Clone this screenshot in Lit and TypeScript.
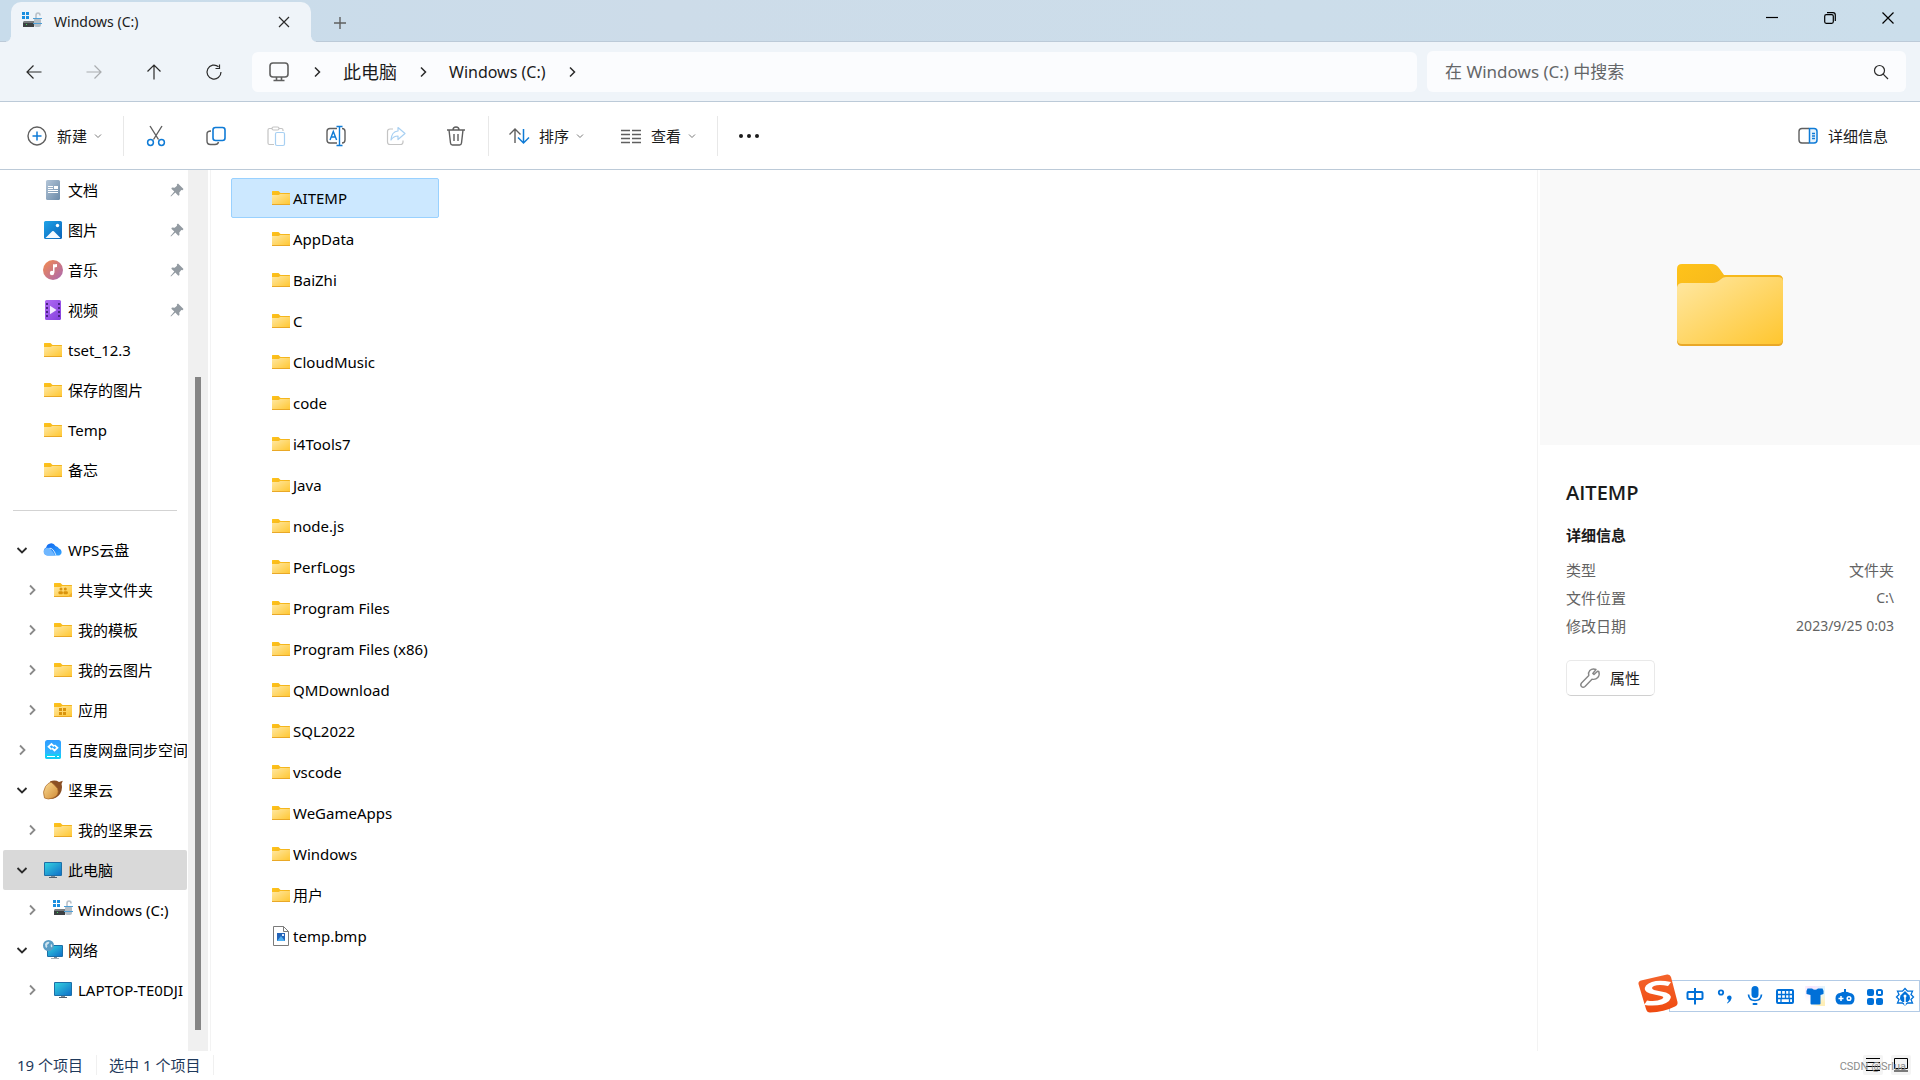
import { LitElement, html, css, svg, nothing, TemplateResult } from "lit";
import { customElement, state } from "lit/decorators.js";
import { classMap } from "lit/directives/class-map.js";

type Glyph = () => TemplateResult;

interface TreeItem {
  label: string;
  icon: Glyph;
  pinned?: boolean;
  nested?: boolean;
  toggle?: "open" | "closed";
  current?: boolean;
}

/* ---------- shared gradients ---------- */
const gradients = html`
  <svg class="defs" width="0" height="0" aria-hidden="true">
    <defs>
      <linearGradient id="g-folder" x1="0" y1="0" x2="1" y2="1">
        <stop offset="0" stop-color="#ffe8a3" /><stop offset="1" stop-color="#ffc62f" />
      </linearGradient>
      <linearGradient id="g-folder-back" x1="0" y1="0" x2="1" y2="1">
        <stop offset="0" stop-color="#ffc31a" /><stop offset="1" stop-color="#e9a71f" />
      </linearGradient>
      <linearGradient id="g-doc" x1="0" y1="0" x2="1" y2="1">
        <stop offset="0" stop-color="#b3c5d8" /><stop offset="1" stop-color="#6b8aa8" />
      </linearGradient>
      <linearGradient id="g-pic" x1="0" y1="0" x2="1" y2="1">
        <stop offset="0" stop-color="#1fa3e8" /><stop offset="1" stop-color="#0b62b8" />
      </linearGradient>
      <linearGradient id="g-music" x1="0" y1="0" x2="1" y2="1">
        <stop offset="0" stop-color="#f58b4c" /><stop offset="1" stop-color="#a867b4" />
      </linearGradient>
      <linearGradient id="g-video" x1="0" y1="0" x2="1" y2="1">
        <stop offset="0" stop-color="#b06bf3" /><stop offset="1" stop-color="#8440dd" />
      </linearGradient>
      <linearGradient id="g-screen" x1="0" y1="0" x2="1" y2="1">
        <stop offset="0" stop-color="#33d1e0" /><stop offset="1" stop-color="#1070c8" />
      </linearGradient>
      <linearGradient id="g-cloud" x1="0" y1="0" x2="1" y2="1">
        <stop offset="0" stop-color="#0a62ee" /><stop offset="1" stop-color="#36a6ff" />
      </linearGradient>
      <linearGradient id="g-nut" x1="0" y1="0" x2="1" y2="1">
        <stop offset="0" stop-color="#fbdc94" /><stop offset="1" stop-color="#d08a35" />
      </linearGradient>
      <linearGradient id="g-sync" x1="0" y1="0" x2="0" y2="1">
        <stop offset="0" stop-color="#2f9dff" /><stop offset="1" stop-color="#2fc0ff" />
      </linearGradient>
      <linearGradient id="g-sogou" x1="0" y1="0" x2="0" y2="1">
        <stop offset="0" stop-color="#f4642c" /><stop offset="1" stop-color="#ef4a10" />
      </linearGradient>
    </defs>
  </svg>
`;

/* ---------- file type icons, 20 x 20 ---------- */
const pic = (body: TemplateResult) =>
  html`<svg class="pic" width="20" height="20" viewBox="0 0 20 20" aria-hidden="true">${body}</svg>`;

const folderBody = svg`
  <path d="M1 3.500Q1 3 1.500 3H7.500L9.500 5H18.500Q19 5 19 5.500V16H1z" fill="url(#g-folder-back)"/>
  <path d="M1 7H7.500L9.300 6H19V16.500Q19 17 18.500 17H1.500Q1 17 1 16.500z" fill="url(#g-folder)"/>
  <path d="M1 16h18v.5q0 .5-.5.5h-17q-.5 0-.5-.5z" fill="#e9a827"/>`;

const folder: Glyph = () => pic(folderBody);
const folderShared: Glyph = () => pic(svg`${folderBody}
  <path d="M19 12.500V17H14.500z" fill="#f0b02e"/>
  <g fill="#d9930d"><circle cx="8" cy="9" r="1.500"/><circle cx="12.300" cy="9" r="1.500"/>
  <rect x="5.500" y="11.300" width="4.300" height="3" rx="1"/><rect x="10.500" y="11.300" width="4.300" height="3" rx="1"/></g>`);
const folderApps: Glyph = () => pic(svg`${folderBody}
  <g fill="#d9930d"><rect x="6" y="8" width="3" height="3"/><rect x="10" y="8" width="3" height="3"/>
  <rect x="6" y="12" width="3" height="3"/><rect x="10" y="12" width="3" height="3"/></g>`);
const documentPic: Glyph = () => pic(svg`
  <rect x="3" y="0" width="14" height="20" rx="1.500" fill="url(#g-doc)"/>
  <g fill="#fff"><rect x="5" y="6" width="5" height="1"/><rect x="5" y="8" width="5" height="1"/>
  <rect x="11" y="6" width="4" height="3"/><rect x="5" y="10" width="10" height="1"/><rect x="5" y="12" width="10" height="1"/></g>`);
const picture: Glyph = () => pic(svg`
  <rect x="1" y="1" width="18" height="18" rx="1.500" fill="url(#g-pic)"/>
  <path d="M2.500 18L9.200 11.300Q10 10.500 10.800 11.300L17.500 18z" fill="#f4f9ff"/><circle cx="14.500" cy="5.500" r="1.700" fill="#fff"/>`);
const music: Glyph = () => pic(svg`
  <circle cx="10" cy="10" r="10" fill="url(#g-music)"/>
  <path d="M10 4.500L14 4V7L11.300 7.400V13" fill="#fff"/><path d="M10 4.300V13h1.300V5z" fill="#fff"/><circle cx="9" cy="13" r="2.200" fill="#fff"/>`);
const video: Glyph = () => pic(svg`
  <rect x="2" y="0" width="16" height="20" rx="1.500" fill="url(#g-video)"/>
  <g fill="#4a2385"><rect x="3" y="3" width="2" height="2"/><rect x="3" y="7" width="2" height="2"/><rect x="3" y="11" width="2" height="2"/><rect x="3" y="15" width="2" height="2"/>
  <rect x="15" y="3" width="2" height="2"/><rect x="15" y="7" width="2" height="2"/><rect x="15" y="11" width="2" height="2"/><rect x="15" y="15" width="2" height="2"/></g>
  <path d="M7 5.800L13.500 10L7 14.200z" fill="#f2eaff"/>`);
const cloud: Glyph = () => pic(svg`
  <path d="M5 15.500A4.300 4.300 0 0 1 3.200 7.400A5 5 0 0 1 12.500 6Q15 6.500 16 8.500A3.700 3.700 0 0 1 16.300 15.500z" fill="url(#g-cloud)"/>
  <path d="M.6 12A4 4 0 0 1 6 8Q8.500 9 12 15.500H4.500Q1 15.300.6 12z" fill="#6fb7ff"/>
  <path d="M6.500 8.300Q10 7.500 13 15.300" fill="none" stroke="#fff" stroke-width=".8"/>`);
const syncDisk: Glyph = () => pic(svg`
  <rect x="2" y="0" width="16" height="19" rx="2.500" fill="url(#g-sync)"/>
  <path d="M2 14H18V16.500Q18 19 15.500 19H4.500Q2 19 2 16.500z" fill="#12cdf5"/>
  <rect x="4" y="16" width="8" height="1" fill="#fff"/><rect x="14" y="16" width="2" height="1" fill="#fff"/>
  <path d="M8.500 9.500L5.500 6.700L8.500 4L11 6.300M11.500 5L14.500 7.800L11.500 10.500L9 8.200" fill="none" stroke="#fff" stroke-width="1.700"/>`);
const nut: Glyph = () => pic(svg`
  <path d="M7 1.500Q12-.5 16 2L19.800.8L18.500 4Q20 9 17 14Q13 19.500 6 19z" fill="#8a4f24"/>
  <path d="M8 2Q12 5 14.500 8.500Q17 15 10 18Q5 20 1.500 18Q-1 12 2.500 6.500Q5 3 8 2z" fill="url(#g-nut)" stroke="#a8672a" stroke-width=".7"/>`);
const computer: Glyph = () => pic(svg`
  <rect x="8" y="16" width="4" height="2" fill="#7e8a96"/><rect x="6" y="17" width="8" height="1" fill="#55606b"/>
  <rect x="1" y="2" width="18" height="14" rx="1" fill="#1b6fa8"/><rect x="2" y="3" width="16" height="12" fill="url(#g-screen)"/>`);
const drive: Glyph = () => pic(svg`
  <g fill="#1b8fe0"><rect x="0" y="0" width="3" height="3"/><rect x="4" y="0" width="3" height="3"/><rect x="0" y="4" width="3" height="3"/><rect x="4" y="4" width="3" height="3"/></g>
  <path d="M2 9H12V15H1V11z" fill="#3c4043"/><path d="M2 9H12V11H1z" fill="#777c80"/><rect x="4" y="12" width="1" height="1" fill="#3fdc5a"/>
  <path d="M14 6V3.500Q14 1 16 1Q18 1 18 3.500" fill="none" stroke="#b9c2ca" stroke-width="1.600"/>
  <rect x="12" y="6" width="7" height="9" rx="2" fill="#b5bec6"/><rect x="11" y="6" width="9" height="1" fill="#4e9fd6"/><rect x="11" y="11" width="9" height="1" fill="#4e9fd6"/>`);
const network: Glyph = () => pic(svg`
  <rect x="11" y="17" width="3" height="2" fill="#7e8a96"/><rect x="8" y="18" width="8" height="1" fill="#a5adb5"/>
  <rect x="4" y="5" width="16" height="12" rx="1" fill="#1b6fa8"/><rect x="5" y="6" width="14" height="10" fill="url(#g-screen)"/>
  <circle cx="5.500" cy="5.500" r="5.500" fill="#5a9cc4"/><path d="M2 4Q4 1 6.500 2Q6 4 4 5Q5 7 3.500 8Q2 7 2 4zM8 4Q10 5 9 7.500Q7 7 8 4z" fill="#cfe4ef"/>`);
const bitmap: Glyph = () => pic(svg`
  <path d="M2.500.5H12.500L17.500 5.500V19.500H2.500z" fill="#fff" stroke="#7b7b7b"/><path d="M12.500.5V5.500H17.500" fill="none" stroke="#7b7b7b"/>
  <rect x="6" y="7" width="8" height="8" fill="#2464b8"/><path d="M6 15L10 10L14 15z" fill="#4fb0f2"/><rect x="11" y="8" width="2" height="2" fill="#dceaff"/>`);

const bigFolder = html`
  <svg width="106" height="84" viewBox="0 0 106 84" aria-hidden="true">
    <path d="M0 5Q0 0 5 0H35Q39 0 42 4L47 11H101Q106 11 106 16V78H0z" fill="url(#g-folder-back)" />
    <path d="M0 23Q1 19 5 19H35Q40 19 44 15Q46 13 49 13H101Q106 13 106 17V77Q106 82 101 82H5Q0 82 0 77z" fill="#e9a827" />
    <path d="M0 23Q1 19 5 19H35Q40 19 44 15Q46 13 49 13H101Q106 13 106 17V75Q106 80 101 80H5Q0 80 0 75z" fill="url(#g-folder)" />
  </svg>
`;

/* ---------- line icons ---------- */
const line = (size: number, body: TemplateResult, cls = "") =>
  html`<svg class="line ${cls}" width=${size} height=${size} viewBox="0 0 ${size} ${size}" aria-hidden="true">${body}</svg>`;

const chevRight = line(12, svg`<path d="M4 1.500L8.500 6L4 10.500"/>`);
const chevDown = line(12, svg`<path d="M1.500 4L6 8.500L10.500 4"/>`);
const caret = line(8, svg`<path d="M1 2.500L4 5.500L7 2.500"/>`, "faint");
const pin = html`<svg width="14" height="14" viewBox="0 0 14 14" aria-hidden="true">
  <path d="M8 .5L13.500 6L12.500 7.200L11.300 7L9.300 9.500L9.500 12L8.300 12.700L5.300 9.500L1 13.500L.5 13L4.300 8.500L1.300 5.700L2 4.500L4.700 4.700L7 2.700L6.800 1.500z" fill="#939ba2" /></svg>`;

const icons = {
  back: line(16, svg`<path d="M15.500 8H1M7.500 1.500L1 8L7.500 14.500"/>`),
  forward: line(16, svg`<path d="M.5 8H15M8.500 1.500L15 8L8.500 14.500"/>`),
  up: line(16, svg`<path d="M8 15.500V1M1.500 7.500L8 1L14.500 7.500"/>`),
  refresh: line(16, svg`<path d="M15 8A7 7 0 1 1 12.500 2.700M13.500.5V4.500H9.500"/>`),
  monitor: line(20, svg`<rect x="1" y="1" width="18" height="14" rx="3" stroke-width="1.600"/><path d="M7.500 15V18M12.500 15V18M4.500 18.500H15.500" stroke-width="1.600"/>`, "grey"),
  search: line(16, svg`<circle cx="6.500" cy="6.500" r="5"/><path d="M10.200 10.200L15 15"/>`),
  close: line(12, svg`<path d="M1 1L11 11M11 1L1 11"/>`),
  plus: line(12, svg`<path d="M6 0V12M0 6H12"/>`, "grey"),
  minimise: line(12, svg`<path d="M0 5.500H12"/>`, "black"),
  restore: line(12, svg`<rect x=".7" y="2.700" width="8.600" height="8.600" rx="1.500"/><path d="M3 .7H9Q11.300.7 11.300 3V9" />`, "black"),
  windowClose: line(12, svg`<path d="M.5.5L11.500 11.500M11.500.5L.5 11.500"/>`, "black"),
  create: line(20, svg`<circle cx="10" cy="10" r="9"/><path class="blue" d="M10 5.500V14.500M5.500 10H14.500" stroke-width="1.500"/>`, "grey"),
  cut: line(20, svg`<path d="M4 0L12.500 13.500M16 0L7.500 13.500"/><circle class="blue" cx="4.500" cy="16.500" r="2.900" stroke-width="1.500"/><circle class="blue" cx="15.500" cy="16.500" r="2.900" stroke-width="1.500"/>`, "grey"),
  copy: line(20, svg`<path d="M5 5Q1 5 1 8V15Q1 18.500 4.500 18.500H9Q12 18.500 12.500 16"/><rect class="blue" x="7" y="1.500" width="12" height="13" rx="2.500" stroke-width="1.600"/>`, "grey"),
  paste: line(20, svg`<path d="M8 18.500H3.500Q2 18.500 2 17V4Q2 2.500 3.500 2.500H6M13 2.500H15.500Q17 2.500 17 4V5" stroke="#c4c4c4"/><rect x="6" y="1" width="7" height="3" rx="1.500" stroke="#c4c4c4"/><rect x="9.500" y="6.500" width="9" height="13" rx="1.500" stroke="#a8d0f2"/>`),
  rename: line(20, svg`<path d="M11 2.500H4Q1 2.500 1 5.500V14Q1 17 4 17H11M16 2.500Q19 2.500 19 5.500V14Q19 17 16 17"/><path class="blue" d="M13.500.5V19.500M10.500.5H16.500M10.500 19.500H16.500M4 14L7.300 5.500L10.600 14M5.200 11H9.400" stroke-width="1.400"/>`, "grey"),
  share: line(20, svg`<path d="M7 3H4Q1.500 3 1.500 5.500V16Q1.500 18.500 4 18.500H14.500Q17 18.500 17 16V14.500" stroke="#c4c4c4"/><path d="M12 1.500L19 7.500L12 13.500V10Q7.500 10 5 14Q5.500 5.500 12 5z" stroke="#a8d0f2" stroke-linejoin="round"/>`),
  bin: line(20, svg`<path d="M1 4H19M7 4Q7 1 10 1Q13 1 13 4M3 4L4.500 17Q4.700 19 6.500 19H13.500Q15.300 19 15.500 17L17 4M8 8V15M12 8V15"/>`, "grey"),
  sort: line(20, svg`<path d="M6 17V3M.5 8.500L6 3L11.500 8.500"/><path class="blue" d="M14.500 3V17M9 11.500L14.500 17L20 11.500" stroke-width="1.500"/>`, "grey"),
  view: line(20, svg`<path d="M0 4.500H9M11 4.500H20M0 8.500H9M11 8.500H20M0 12.500H9M11 12.500H20M0 16.500H9M11 16.500H20"/>`, "grey"),
  more: html`<svg width="20" height="20" viewBox="0 0 20 20" aria-hidden="true"><g fill="#1b1b1b"><circle cx="2" cy="10" r="2" /><circle cx="10" cy="10" r="2" /><circle cx="18" cy="10" r="2" /></g></svg>`,
  pane: line(20, svg`<path d="M11 2.500H4Q1 2.500 1 5.500V14Q1 17 4 17H11"/><path class="blue" d="M11.500 2.500H16Q19 2.500 19 5.500V14Q19 17 16 17H11.500zM14 7.500H17M14 10H17M14 12.500H17" stroke-width="1.500" fill="#e8f3fc"/>`, "grey"),
  wrench: line(20, svg`<path d="M17.500 3.200L14 6.500L12.800 5.500L16 1.500Q12.500 0 9.800 2.500Q8 4.500 8.800 7.500L1.500 15Q0 17 1.500 18.500Q3 20 5 18.500L12 11.200Q15.500 12 17.800 9.500Q20 7 18.800 3.500z" stroke-linejoin="round"/>`, "grey"),
};

/* ---------- input method icons ---------- */
const ime = (body: TemplateResult) =>
  html`<svg width="20" height="20" viewBox="0 0 20 20" aria-hidden="true">${body}</svg>`;
const B = "#0070d8";
const imeButtons: { name: string; icon: TemplateResult; glow?: boolean }[] = [
  { name: "中文", icon: ime(svg`<rect x="2.500" y="6" width="15" height="7" rx="1" fill="none" stroke=${B} stroke-width="2"/><path d="M10 2V18.500" stroke=${B} stroke-width="2"/>`) },
  { name: "标点", icon: ime(svg`<circle cx="6" cy="6.500" r="2.200" fill="none" stroke=${B} stroke-width="1.800"/><path d="M12 12Q12 9.500 14.500 9.500Q17 9.800 16.500 12.500Q16 15.500 12.500 17.500L12 17Q14 15 13.700 13.700Q12 13.500 12 12z" fill=${B}/>`) },
  { name: "语音", icon: ime(svg`<rect x="6.500" y="0" width="7" height="12" rx="3.500" fill=${B}/><path d="M3.500 8.500Q4 14.500 10 14.500Q16 14.500 16.500 8.500" fill="none" stroke=${B} stroke-width="1.700"/><rect x="7.500" y="17" width="5" height="2" rx="1" fill=${B}/>`) },
  { name: "键盘", icon: ime(svg`<rect x="2" y="4" width="16" height="13" rx="1" fill="none" stroke=${B} stroke-width="2"/><path d="M3 8.500H17M3 12.500H17M6.500 4V12M10.500 4V12M14 4V12M6 12.500V16M14.500 12.500V16" stroke=${B} stroke-width="1.300"/>`) },
  { name: "皮肤", glow: true, icon: ime(svg`<path d="M2.500 2.500H7Q10 5 13 2.500H17.500Q19 4.500 18.500 8L15.500 9V17.500Q15.500 18.500 14.500 18.500H6.500Q5.500 18.500 5.500 17.500V9L1.500 8Q1 4.500 2.500 2.500z" fill=${B}/>`) },
  { name: "助手", icon: ime(svg`<rect x="9" y="3" width="2" height="4" fill=${B}/><path d="M5 7Q10 4.500 15 7Q19.500 7.500 19.500 12.500Q19.500 18.500 14.500 18.500H5.500Q.5 18.500.5 12.500Q.5 7.500 5 7z" fill=${B}/><path d="M3.500 12.500H8.500M6 10V15" stroke="#fff" stroke-width="1.500"/><circle cx="14" cy="12.500" r="1.800" fill="none" stroke="#fff" stroke-width="1.500"/>`) },
  { name: "工具箱", icon: ime(svg`<rect x="2" y="3" width="7" height="7" rx="2" fill=${B}/><rect x="2" y="12" width="7" height="7" rx="2" fill=${B}/><rect x="11" y="12" width="7" height="7" rx="2" fill=${B}/><rect x="12" y="4" width="5" height="5" rx="1.500" fill="none" stroke=${B} stroke-width="2"/>`) },
  { name: "智能", icon: ime(svg`<path d="M10 2.500L12.500 5.200H17.500L16 8.500L18.500 11L16 13.500L17.500 17H12.500L10 19L7.500 17H2.500L4 13.500L1.500 11L4 8.500L2.500 5.200H7.500z" fill="none" stroke=${B} stroke-width="1.300"/><path d="M10 5L14.500 9.500Q16 14 12.500 16H7.500Q4 14 5.500 9.500z" fill=${B}/><path d="M10 9V19" stroke="#fff" stroke-width="1.500"/><circle cx="10" cy="10" r="1.500" fill="#fff"/>`) },
];

const tree: (TreeItem | null)[] = [
  { label: "文档", icon: documentPic, pinned: true },
  { label: "图片", icon: picture, pinned: true },
  { label: "音乐", icon: music, pinned: true },
  { label: "视频", icon: video, pinned: true },
  { label: "tset_12.3", icon: folder },
  { label: "保存的图片", icon: folder },
  { label: "Temp", icon: folder },
  { label: "备忘", icon: folder },
  null,
  { label: "WPS云盘", icon: cloud, toggle: "open" },
  { label: "共享文件夹", icon: folderShared, toggle: "closed", nested: true },
  { label: "我的模板", icon: folder, toggle: "closed", nested: true },
  { label: "我的云图片", icon: folder, toggle: "closed", nested: true },
  { label: "应用", icon: folderApps, toggle: "closed", nested: true },
  { label: "百度网盘同步空间", icon: syncDisk, toggle: "closed" },
  { label: "坚果云", icon: nut, toggle: "open" },
  { label: "我的坚果云", icon: folder, toggle: "closed", nested: true },
  { label: "此电脑", icon: computer, toggle: "open", current: true },
  { label: "Windows (C:)", icon: drive, toggle: "closed", nested: true },
  { label: "网络", icon: network, toggle: "open" },
  { label: "LAPTOP-TE0DJI", icon: computer, toggle: "closed", nested: true },
];

const files = [
  "AITEMP", "AppData", "BaiZhi", "C", "CloudMusic", "code", "i4Tools7", "Java", "node.js", "PerfLogs",
  "Program Files", "Program Files (x86)", "QMDownload", "SQL2022", "vscode", "WeGameApps", "Windows", "用户", "temp.bmp",
];

@customElement("app-root")
export class AppRoot extends LitElement {
  @state() private selected = "AITEMP";

  static styles = css`
    :host {
      display: flex;
      flex-direction: column;
      height: 100vh;
      overflow: hidden;
      background: #fff;
      color: #1b1b1b;
      font: 15px/20px "Noto Sans", "Noto Sans CJK SC", sans-serif;
      --edge: #bccad8;
    }
    * { box-sizing: border-box; }
    .defs { position: absolute; }
    button, input {
      font: inherit;
      color: inherit;
      border: 0;
      background: none;
      padding: 0;
      margin: 0;
    }
    button { display: inline-flex; align-items: center; }
    svg { display: block; flex: none; }
    .line { fill: none; stroke: #2b2b2b; stroke-width: 1.2; overflow: visible; }
    .line.grey { stroke: #5f5f5f; stroke-width: 1.4; }
    .line.faint { stroke: #7a7a7a; stroke-width: 1; }
    .line.black { stroke: #000; }
    .line .blue { stroke: #0f7bd6; }
    ul { list-style: none; margin: 0; padding: 0; }

    .titlebar {
      display: flex;
      flex: none;
      height: 42px;
      padding-left: 11px;
      background: linear-gradient(90deg, #c8dceb, #cddce9 35%, #cbdeeb);
      box-shadow: inset 0 -1px var(--edge);
    }
    .tab {
      position: relative;
      display: flex;
      align-items: center;
      width: 300px;
      margin-top: 2px;
      padding: 0 21px 0 11px;
      border-radius: 10px 10px 0 0;
      background: #eff4f9;
      font-size: 14px;
    }
    .tab::before, .tab::after {
      content: "";
      position: absolute;
      bottom: 0;
      width: 5px;
      height: 5px;
    }
    .tab::before { right: 100%; background: radial-gradient(circle at 0 0, transparent 4px, #eff4f9 5px); }
    .tab::after { left: 100%; background: radial-gradient(circle at 100% 0, transparent 4px, #eff4f9 5px); }
    .tab-name { flex: 1; margin-left: 12px; }
    .new-tab { width: 58px; justify-content: center; padding-top: 3px; }
    .window-controls { display: flex; margin-left: auto; padding-right: 3px; }
    .window-controls button { width: 58px; height: 36px; justify-content: center; }

    .navbar {
      display: flex;
      flex: none;
      align-items: center;
      height: 60px;
      padding: 0 14px 0 4px;
      background: #eff4f9;
      border-bottom: 1px solid var(--edge);
    }
    .nav-btn { width: 60px; height: 40px; justify-content: center; }
    .nav-btn:disabled { opacity: 0.35; }
    .address {
      display: flex;
      flex: 1;
      align-items: center;
      gap: 20px;
      height: 40px;
      margin: 0 10px 0 8px;
      padding-left: 17px;
      border-radius: 6px;
      background: #fbfcfe;
    }
    .address .line:not(.grey) { stroke-width: 1.5; }
    .sep { margin-left: 2px; }
    .crumb { color: inherit; text-decoration: none; font-size: 16px; }
    .crumb.cjk { font-size: 18px; }
    .search {
      display: flex;
      align-items: center;
      width: 479px;
      height: 41px;
      padding: 0 17px 0 18px;
      border-radius: 6px;
      background: #fbfcfe;
    }
    .search input { flex: 1; min-width: 0; outline: none; font-size: 17px; }
    .search input::placeholder { color: #646668; opacity: 1; }

    .toolbar {
      display: flex;
      flex: none;
      align-items: center;
      height: 68px;
      padding: 0 32px 0 27px;
      border-bottom: 1px solid var(--edge);
    }
    .cmd { gap: 10px; }
    .cmd .faint { margin-left: -3px; }
    .cmd.icon { width: 60px; height: 40px; justify-content: center; }
    .cmd.spaced { margin-left: 37px; }
    .divider { width: 1px; height: 40px; margin: 0 21px; background: #e8e8e8; }
    .divider.tight { margin-right: 2px; }
    .divider.after { margin: 0 20px 0 2px; }
    .details-toggle { margin-left: auto; }

    .body { display: flex; flex: 1; min-height: 0; }
    .sidebar { display: flex; width: 211px; border-right: 1px solid #f3f3f3; }
    .tree { flex: 1; min-width: 0; padding: 0 1px 0 3px; overflow: hidden; }
    .node {
      display: flex;
      align-items: center;
      height: 40px;
      padding-left: 13px;
      border-radius: 2px;
      color: #000;
      white-space: nowrap;
      overflow: hidden;
    }
    .node.nested { padding-left: 23px; }
    .node.current { background: #d9d9d9; }
    .node button { width: 12px; height: 20px; }
    .node a { display: flex; flex: 1; align-items: center; min-width: 0; gap: 5px; color: inherit; text-decoration: none; }
    .toggle-space { width: 12px; margin-right: 15px; flex: none; display: flex; }
    .toggle-space .line { stroke-width: 1.8; }
    .closed .toggle-space .line { stroke: #8a8a8a; }
    .pin { margin-right: 3px; }
    .rule { display: flex; align-items: center; height: 40px; padding: 0 10px; }
    .rule hr { flex: 1; margin: 0; border: 0; border-top: 1px solid #d3d3d3; }
    .scroll { flex: none; width: 20px; margin-right: 2px; padding: 207px 7px 21px; background: #f0f0f0; }
    .thumb { height: 100%; background: #858585; }

    .files { flex: 1; padding: 8px 20px; min-width: 0; overflow: hidden; }
    .files ul { display: grid; gap: 1px; width: 208px; }
    .file {
      width: 100%;
      height: 40px;
      padding-left: 39px;
      gap: 2px;
      border: 1px solid transparent;
      border-radius: 2px;
      color: #000;
      white-space: nowrap;
    }
    .file.selected { background: #cce8ff; border-color: #99d1ff; }

    .details { width: 383px; padding-left: 2px; border-left: 1px solid #f3f3f3; }
    .preview { display: flex; align-items: center; justify-content: center; height: 275px; padding-bottom: 4px; background: #f9f9f9; }
    .info { padding: 34px 26px; }
    h2 { margin: 0; font-family: "Open Sans", "Noto Sans CJK SC", sans-serif; font-size: 20px; line-height: 28px; font-weight: 600; }
    h3 { margin: 18px 0 11px; font-size: 15px; line-height: 20px; font-weight: 700; }
    dl { margin: 0; color: #636363; line-height: 28px; }
    dl div { display: flex; justify-content: space-between; }
    dd { margin: 0; }
    dd.latin { font-size: 14px; }
    .props {
      height: 36px;
      margin-top: 20px;
      padding: 0 14px 0 13px;
      gap: 10px;
      border: 1px solid #e9e9e9;
      border-bottom-color: #d0d0d0;
      border-radius: 5px;
    }
    .props .line { stroke: #868686; }

    .status { display: flex; flex: none; align-items: center; height: 29px; padding: 0 9px 2px 17px; color: #1f3a5c; }
    .status span { padding-right: 13px; border-right: 1px solid #f0f0f0; }
    .status span + span { padding-left: 12px; }
    .views { display: flex; margin-left: auto; gap: 8px; }
    .views button { width: 20px; height: 20px; justify-content: center; background: #f4f4f4; border-radius: 2px; }
    .mark { position: absolute; right: 14px; bottom: 5px; font: 11px/16px Roboto, "Noto Sans CJK SC", sans-serif; color: #8c8c8c; }

    .ime {
      position: absolute;
      right: 0;
      bottom: 68px;
      display: flex;
      align-items: center;
      gap: 10px;
      height: 32px;
      padding: 0 4px 0 15px;
      border: 1px solid #b3cbe6;
      background: #fff;
    }
    .ime .logo { position: absolute; right: 100%; bottom: -2px; margin-right: -8px; }
    .ime .glow { background: radial-gradient(circle at 90% 95%, #ffefb8 10%, transparent 45%), radial-gradient(circle at 30% 10%, #f6e2fb, transparent 60%), radial-gradient(circle at 90% 20%, #d9f3fc, transparent 60%); }
  `;

  private renderNode(item: TreeItem | null) {
    if (!item) return html`<li class="rule"><hr /></li>`;
    const classes = {
      node: true,
      nested: !!item.nested,
      current: !!item.current,
      closed: item.toggle === "closed",
    };
    return html`
      <li class=${classMap(classes)}>
        <span class="toggle-space">
          ${item.toggle
            ? html`<button aria-label="展开或折叠 ${item.label}">${item.toggle === "open" ? chevDown : chevRight}</button>`
            : nothing}
        </span>
        <a href="#">${item.icon()}<span>${item.label}</span></a>
        ${item.pinned ? html`<span class="pin">${pin}</span>` : nothing}
      </li>
    `;
  }

  private renderFile(name: string) {
    return html`
      <li>
        <button
          class=${classMap({ file: true, selected: name === this.selected })}
          @click=${() => (this.selected = name)}
        >${name.endsWith(".bmp") ? bitmap() : folder()}<span>${name}</span></button>
      </li>
    `;
  }

  render() {
    return html`
      ${gradients}
      <header class="titlebar">
        <div class="tab">
          ${drive()}<span class="tab-name">Windows (C:)</span>
          <button aria-label="关闭标签页">${icons.close}</button>
        </div>
        <button class="new-tab" aria-label="新建标签页">${icons.plus}</button>
        <div class="window-controls">
          <button aria-label="最小化">${icons.minimise}</button>
          <button aria-label="还原">${icons.restore}</button>
          <button aria-label="关闭">${icons.windowClose}</button>
        </div>
      </header>

      <nav class="navbar">
        <button class="nav-btn" aria-label="后退">${icons.back}</button>
        <button class="nav-btn" aria-label="前进" disabled>${icons.forward}</button>
        <button class="nav-btn" aria-label="向上">${icons.up}</button>
        <button class="nav-btn" aria-label="刷新">${icons.refresh}</button>
        <div class="address">
          ${icons.monitor}
          <span class="sep">${chevRight}</span>
          <a class="crumb cjk" href="#">此电脑</a>
          ${chevRight}
          <a class="crumb" href="#">Windows (C:)</a>
          ${chevRight}
        </div>
        <label class="search">
          <input type="text" aria-label="搜索" placeholder="在 Windows (C:) 中搜索" />
          ${icons.search}
        </label>
      </nav>

      <div class="toolbar">
        <button class="cmd">${icons.create}新建${caret}</button>
        <span class="divider tight"></span>
        <button class="cmd icon" aria-label="剪切">${icons.cut}</button>
        <button class="cmd icon" aria-label="复制">${icons.copy}</button>
        <button class="cmd icon" aria-label="粘贴" disabled>${icons.paste}</button>
        <button class="cmd icon" aria-label="重命名">${icons.rename}</button>
        <button class="cmd icon" aria-label="共享" disabled>${icons.share}</button>
        <button class="cmd icon" aria-label="删除">${icons.bin}</button>
        <span class="divider after"></span>
        <button class="cmd">${icons.sort}排序${caret}</button>
        <button class="cmd spaced">${icons.view}查看${caret}</button>
        <span class="divider"></span>
        <button class="cmd" aria-label="更多">${icons.more}</button>
        <button class="cmd details-toggle">${icons.pane}详细信息</button>
      </div>

      <div class="body">
        <aside class="sidebar">
          <ul class="tree">${tree.map((item) => this.renderNode(item))}</ul>
          <div class="scroll"><div class="thumb"></div></div>
        </aside>
        <main class="files">
          <ul>${files.map((name) => this.renderFile(name))}</ul>
        </main>
        <aside class="details">
          <div class="preview">${bigFolder}</div>
          <div class="info">
            <h2>${this.selected}</h2>
            <h3>详细信息</h3>
            <dl>
              <div><dt>类型</dt><dd>文件夹</dd></div>
              <div><dt>文件位置</dt><dd class="latin">C:\\</dd></div>
              <div><dt>修改日期</dt><dd class="latin">2023/9/25 0:03</dd></div>
            </dl>
            <button class="props">${icons.wrench}属性</button>
          </div>
        </aside>
      </div>

      <footer class="status">
        <span>19 个项目</span><span>选中 1 个项目</span>
        <div class="views">
          <button aria-label="详细信息视图">
            <svg width="14" height="14" viewBox="0 0 14 14"><path d="M0 .5H14M0 4.500H14M0 8.500H14M0 12.500H14" stroke="#000" /></svg>
          </button>
          <button aria-label="大缩略图视图">
            <svg width="14" height="14" viewBox="0 0 14 14"><path d="M.5.500H13.500V10.500H.5zM0 13H14" fill="none" stroke="#000" /></svg>
          </button>
        </div>
      </footer>
      <span class="mark">CSDN @Srlua</span>

      <div class="ime">
        <svg class="logo" width="40" height="39" viewBox="0 0 40 39" aria-hidden="true">
          <path d="M3 6.500L29 .5Q32 0 33 3L39.500 28Q40 31 37 32.500Q26 38 12 38.500Q9 38.500 8 35L.500 10Q0 7.500 3 6.500z" fill="url(#g-sogou)" />
          <path d="M33 8Q31 11 30 12Q21 10 16 12Q12 14 16 16L28 18.500Q36 21.500 31 27Q24 33 6 31Q8 28 9 26.500Q18 28 24 25Q27 23 23 22L12 19.500Q4 17 8 11.500Q15 4.500 33 8z" fill="#fff" />
        </svg>
        ${imeButtons.map((b) => html`<button class=${b.glow ? "glow" : ""} aria-label=${b.name}>${b.icon}</button>`)}
      </div>
    `;
  }
}
